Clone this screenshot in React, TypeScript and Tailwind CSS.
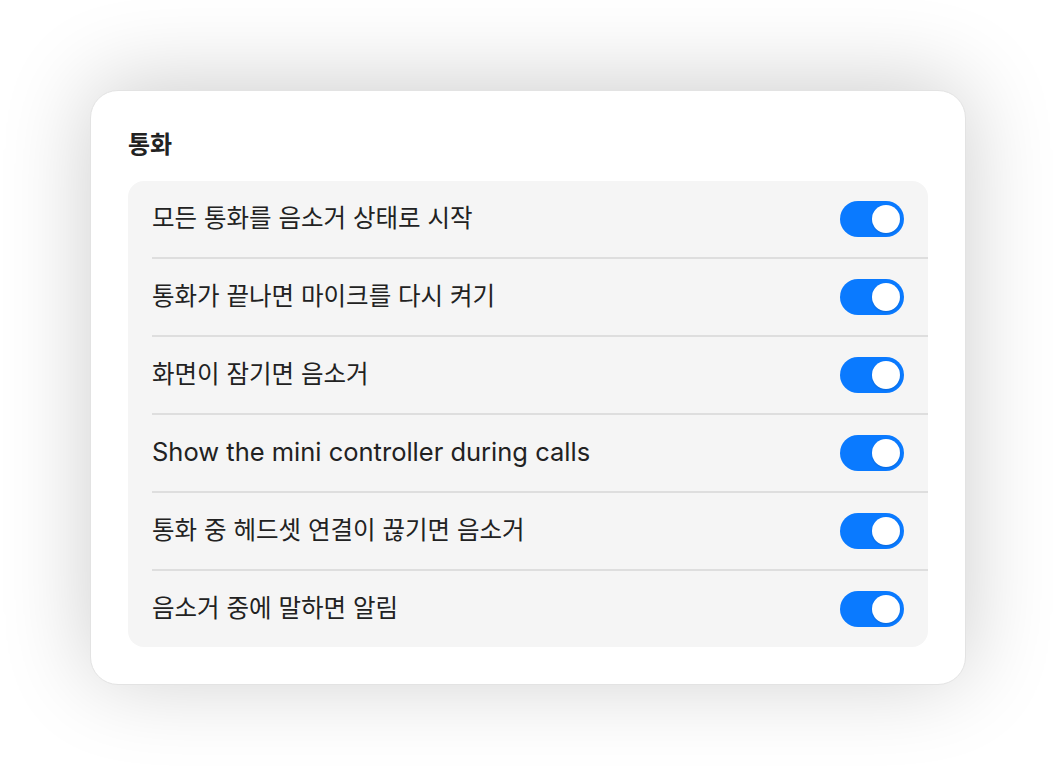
import React from "react";

const rows: { text: string; en?: boolean }[] = [
  { text: "모든 통화를 음소거 상태로 시작" },
  { text: "통화가 끝나면 마이크를 다시 켜기" },
  { text: "화면이 잠기면 음소거" },
  { text: "Show the mini controller during calls", en: true },
  { text: "통화 중 헤드셋 연결이 끊기면 음소거" },
  { text: "음소거 중에 말하면 알림" },
];

function Toggle() {
  return (
    <div className="flex h-[36px] w-[64px] shrink-0 items-center justify-end rounded-full bg-[#0a7aff] pr-[4px]">
      <div className="h-[28px] w-[28px] rounded-full bg-white shadow-[0_1px_2px_rgba(0,0,0,0.15)]" />
    </div>
  );
}

export default function App() {
  return (
    <div
      className="flex h-[774px] w-[1056px] items-center justify-center bg-white"
      style={{ fontFamily: 'Inter, "Noto Sans CJK KR", sans-serif' }}
    >
      <div className="flex w-[876px] flex-col rounded-[28px] border border-[#e3e3e3] bg-white px-[37px] pb-[37px] pt-[37px] shadow-[0_-6px_90px_rgba(0,0,0,0.2)]">
        <div className="mb-[19px] flex h-[34px] items-center text-[24px] font-bold leading-none text-[#222]">
          통화
        </div>
        <div className="flex flex-col rounded-[16px] bg-[#f5f5f5]">
          {rows.map((r, i) => (
            <div key={i} className="flex flex-col pl-[24px]">
              {i > 0 && <div className="h-[2px] bg-[#dedede]" />}
              <div className="flex h-[76px] items-center justify-between pr-[24px]">
                <span
                  className={
                    r.en
                      ? "text-[25.5px] text-[#222]"
                      : "text-[24.5px] text-[#222]"
                  }
                >
                  {r.text}
                </span>
                <Toggle />
              </div>
            </div>
          ))}
        </div>
      </div>
    </div>
  );
}
